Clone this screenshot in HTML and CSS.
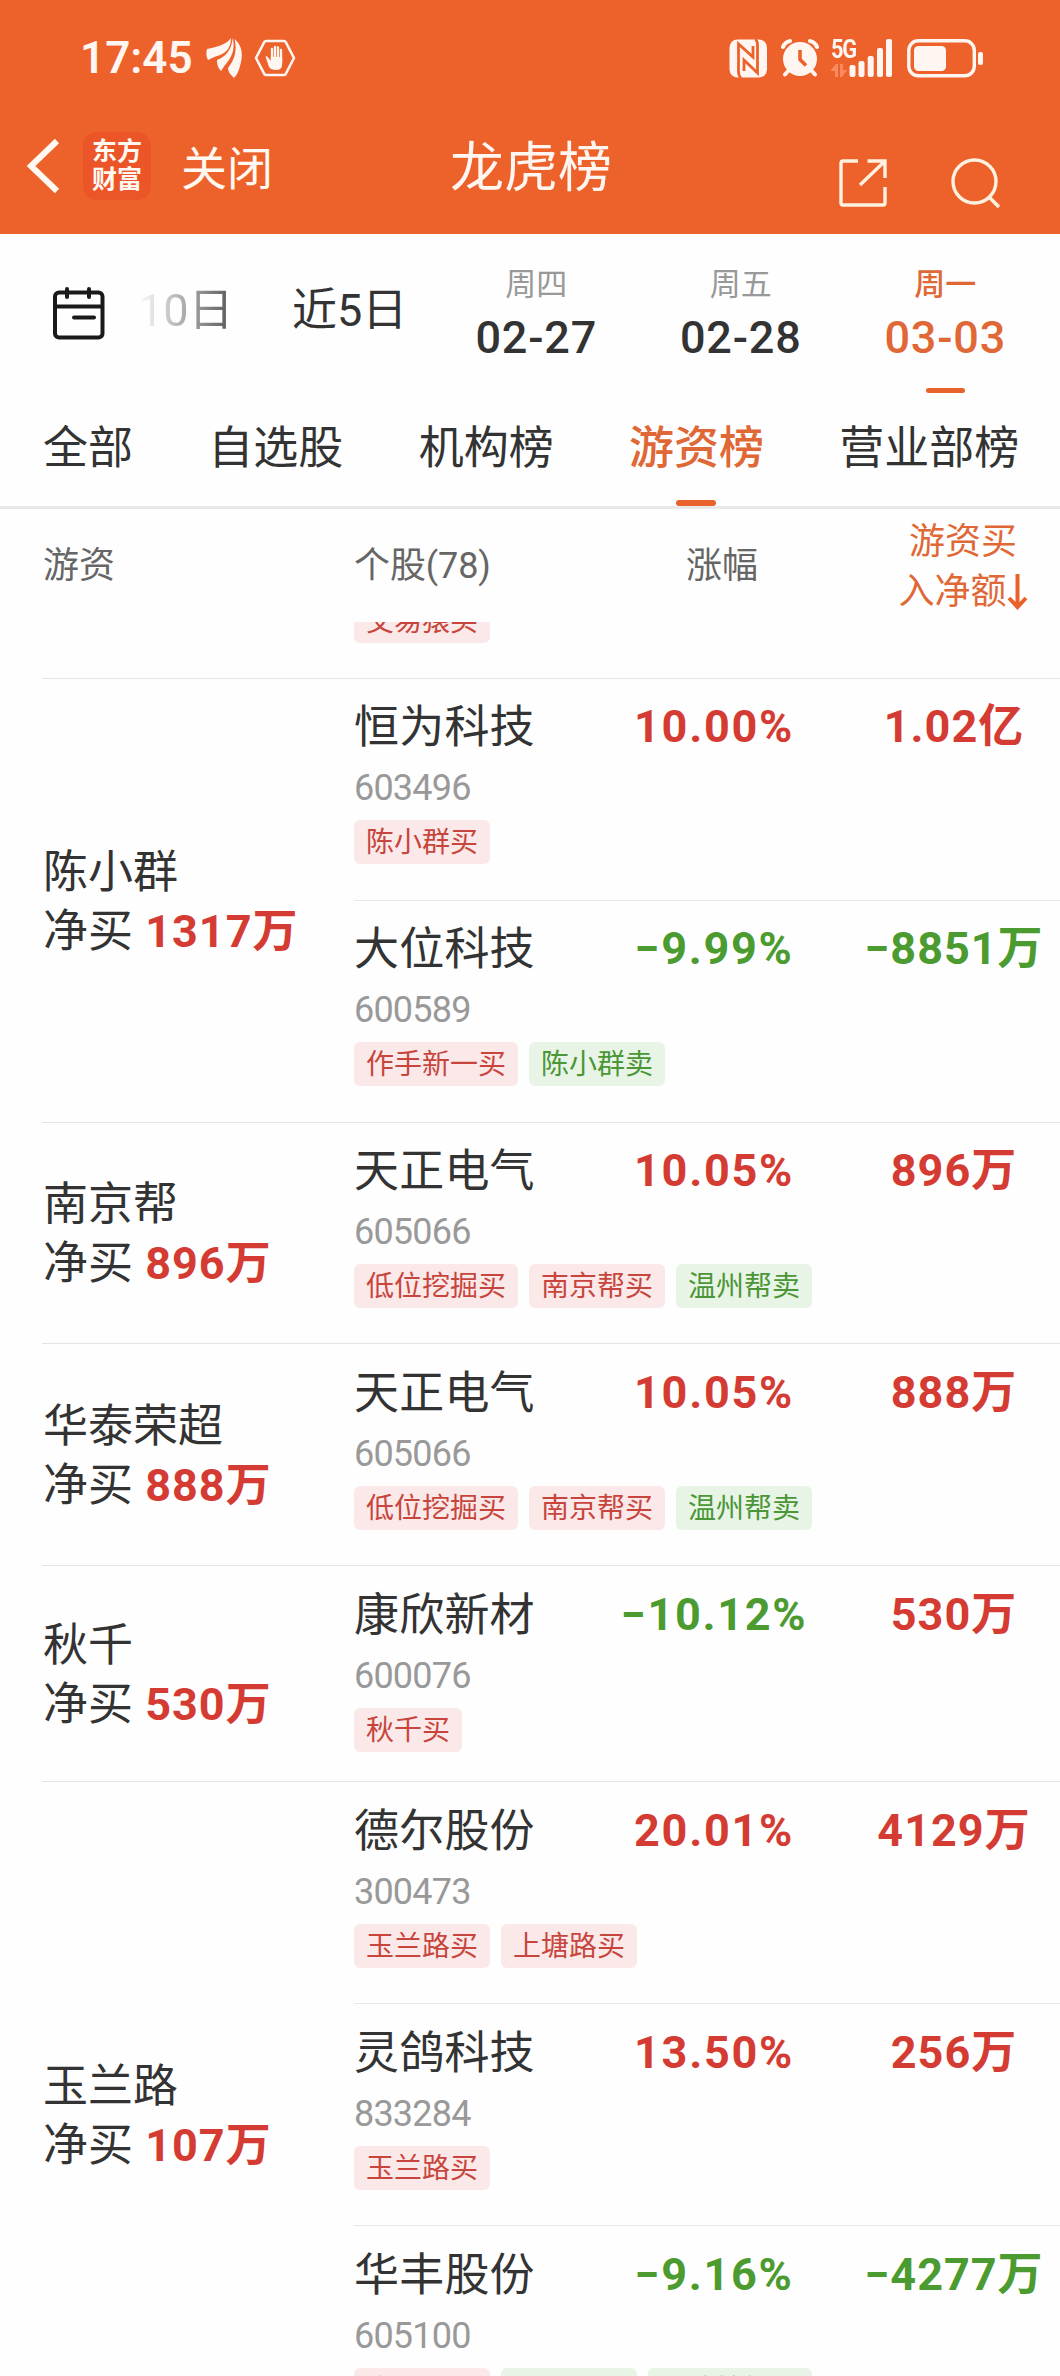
FILE: index.html
```html
<!DOCTYPE html>
<html lang="zh-CN">
<head>
<meta charset="utf-8">
<title>龙虎榜</title>
<link rel="stylesheet" href="styles.css">
</head>
<body>
<div class="screen">
  <header class="top">
    <div class="status">
      <span class="clock">17:45</span>
      <svg class="swoosh" width="36" height="42" viewBox="0 0 36 42"><g fill="#fff6f1"><path d="M1 12C10 10 20 8 25 1C25 13 18 17 11 19C7 20 5 22 2 23C0 19 0 16 1 12Z"/><path d="M26.500 1C30 12 25 21 20 27C18 29 17 31 15 34C12 31 11 28 11 23C19 20 26 13 26.500 1Z"/><path d="M28.500 2C37 9 37 19 34 29C33 33 31 38 28 41C25 38 22 35 22 31C27 25 32 15 28.500 2Z"/></g></svg>
      <svg class="hex" width="42" height="38" viewBox="0 0 42 38"><path d="M12 2H30Q31 2 31.700 3L40 19L31.700 35Q31 36 30 36H12Q11 36 10.300 35L2 19L10.300 3Q11 2 12 2Z" fill="none" stroke="#fff6f1" stroke-width="2.600" stroke-linejoin="round"/><path d="M18 10V22M21 8V22M24 8.500V22M27 11V23" fill="none" stroke="#fff6f1" stroke-width="2.300" stroke-linecap="round"/><path d="M11.500 17.500Q13.500 16.500 14.500 19L16.800 22V18H28.200V25Q28.200 31 22 31Q17 31 15 28Z" fill="#fff6f1"/></svg>
      <span class="fill"></span>
      <svg class="nfc" width="39" height="39" viewBox="0 0 39 39"><rect x="0.500" y="0.500" width="37.500" height="38" rx="8" fill="#fff6f1"/><path d="M12 39Q9.500 37 9.500 33V5L24 18V7M26.500 0Q28.500 2 28.500 6V34L15 21V32" fill="none" stroke="#ed622b" stroke-width="2.800"/></svg>
      <svg class="alarm" width="38" height="38" viewBox="0 0 38 38"><g fill="none" stroke="#fff6f1" stroke-linecap="round"><path d="M2 8Q4 3 9 2M29 2Q34 3 36 8" stroke-width="4"/><path d="M8 31L4 35.500M30 31L34 35.500" stroke-width="4"/></g><circle cx="19" cy="20" r="17" fill="#fff6f1"/><path d="M19 11V20.500L25 26.500" fill="none" stroke="#ed622b" stroke-width="3.600"/></svg>
      <div class="net">
        <div class="gen"><span>5G</span><svg width="16" height="13" viewBox="0 0 16 13"><path d="M0 6L5 0H7V13H4V7H0ZM9 0H12V6H16L11 13H9Z" fill="#f78a5f"/></svg></div>
        <svg width="44" height="38" viewBox="0 0 44 38"><g fill="#fff6f1"><rect x="0.500" y="26" width="6" height="12" rx="2"/><rect x="9.500" y="22" width="6" height="16" rx="2"/><rect x="18.700" y="17" width="6" height="21" rx="2"/><rect x="28" y="9" width="6" height="29" rx="2"/><rect x="37" y="0" width="6" height="38" rx="2"/></g></svg>
      </div>
      <svg class="batt" width="77" height="39" viewBox="0 0 77 39"><rect x="1.800" y="1.800" width="65.500" height="35" rx="9.500" fill="none" stroke="#fff6f1" stroke-width="3.400"/><rect x="7" y="7" width="32" height="25" rx="4.500" fill="#fff6f1"/><rect x="71" y="13" width="5" height="13" rx="2" fill="#fff6f1"/></svg>
    </div>
    <div class="nav">
      <svg class="back" width="34" height="56" viewBox="0 0 34 56"><path d="M31 3L5 28L31 53" fill="none" stroke="#fff9f2" stroke-width="6"/></svg>
      <div class="app"><span>东方</span><span>财富</span></div>
      <span class="close">关闭</span>
      <h1>龙虎榜</h1>
      <svg class="share" width="48" height="48" viewBox="0 0 48 48"><path d="M19 2H4Q2 2 2 4V44Q2 46 4 46H44Q46 46 46 44V28M28.500 2H46V19M46 2L21 26" fill="none" stroke="#fff1df" stroke-width="3.400"/></svg>
      <svg class="search" width="50" height="50" viewBox="0 0 50 50"><circle cx="23.500" cy="23.500" r="21.500" fill="none" stroke="#fff1df" stroke-width="3.400"/><path d="M38 39L48 49" stroke="#fff1df" stroke-width="3.600"/></svg>
    </div>
  </header>

  <div class="dates">
    <svg class="cal" width="52" height="54" viewBox="0 0 52 54"><g fill="none" stroke="#1a1a1a" stroke-width="4"><rect x="2" y="6.500" width="47.500" height="45" rx="4"/><path d="M2 20.500H50"/><path d="M14 3V11M36 3V11M21 31.500H41" stroke-linecap="round"/></g></svg>
    <span class="range faded">10日</span>
    <span class="range">近5日</span>
    <div class="day"><small>周四</small><b>02-27</b></div>
    <div class="day"><small>周五</small><b>02-28</b></div>
    <div class="day on"><small>周一</small><b>03-03</b><i></i></div>
  </div>

  <nav class="tabs">
    <span>全部</span><span>自选股</span><span>机构榜</span><span class="on">游资榜<i></i></span><span>营业部榜</span>
  </nav>

  <div class="head">
    <span class="h-who">游资</span>
    <span class="h-stock">个股(78)</span>
    <span class="h-pct">涨幅</span>
    <div class="h-net"><span>游资买</span><span>入净额<svg width="21" height="37" viewBox="0 0 21 37"><path d="M10.500 1V34M2 25L10.500 34L19 25" fill="none" stroke="#e8632b" stroke-width="4"/></svg></span></div>
  </div>

  <main class="list">
    <div class="tail"><span class="tag buy">交易猿买</span></div>

    <section class="group">
      <div class="who"><span>陈小群</span><span>净买 <b>1317万</b></span></div>
      <div class="rows">
        <article class="row up">
          <div class="line"><span class="name">恒为科技</span><b>10.00%</b><b>1.02亿</b></div>
          <div class="code">603496</div>
          <div class="tags"><span class="tag buy">陈小群买</span></div>
        </article>
        <article class="row down">
          <div class="line"><span class="name">大位科技</span><b>−9.99%</b><b>−8851万</b></div>
          <div class="code">600589</div>
          <div class="tags"><span class="tag buy">作手新一买</span><span class="tag sell">陈小群卖</span></div>
        </article>
      </div>
    </section>

    <section class="group tight">
      <div class="who"><span>南京帮</span><span>净买 <b>896万</b></span></div>
      <div class="rows">
        <article class="row up">
          <div class="line"><span class="name">天正电气</span><b>10.05%</b><b>896万</b></div>
          <div class="code">605066</div>
          <div class="tags"><span class="tag buy">低位挖掘买</span><span class="tag buy">南京帮买</span><span class="tag sell">温州帮卖</span></div>
        </article>
      </div>
    </section>

    <section class="group low">
      <div class="who"><span>华泰荣超</span><span>净买 <b>888万</b></span></div>
      <div class="rows">
        <article class="row up">
          <div class="line"><span class="name">天正电气</span><b>10.05%</b><b>888万</b></div>
          <div class="code">605066</div>
          <div class="tags"><span class="tag buy">低位挖掘买</span><span class="tag buy">南京帮买</span><span class="tag sell">温州帮卖</span></div>
        </article>
      </div>
    </section>

    <section class="group low short">
      <div class="who"><span>秋千</span><span>净买 <b>530万</b></span></div>
      <div class="rows">
        <article class="row down">
          <div class="line"><span class="name">康欣新材</span><b>−10.12%</b><b class="pos">530万</b></div>
          <div class="code">600076</div>
          <div class="tags"><span class="tag buy">秋千买</span></div>
        </article>
      </div>
    </section>

    <section class="group low">
      <div class="who"><span>玉兰路</span><span>净买 <b>107万</b></span></div>
      <div class="rows">
        <article class="row up">
          <div class="line"><span class="name">德尔股份</span><b>20.01%</b><b>4129万</b></div>
          <div class="code">300473</div>
          <div class="tags"><span class="tag buy">玉兰路买</span><span class="tag buy">上塘路买</span></div>
        </article>
        <article class="row up">
          <div class="line"><span class="name">灵鸽科技</span><b>13.50%</b><b>256万</b></div>
          <div class="code">833284</div>
          <div class="tags"><span class="tag buy">玉兰路买</span></div>
        </article>
        <article class="row down">
          <div class="line"><span class="name">华丰股份</span><b>−9.16%</b><b>−4277万</b></div>
          <div class="code">605100</div>
          <div class="tags"><span class="tag buy">方新侠买</span><span class="tag sell">玉兰路卖</span><span class="tag sell">低位挖掘卖</span></div>
        </article>
      </div>
    </section>
  </main>
</div>
</body>
</html>
```
FILE: styles.css
```css
* { box-sizing: border-box; }
body {
  margin: 0;
  background: #fefefe;
  color: #333;
  font-family: Roboto, "Noto Sans CJK SC", sans-serif;
}
svg { display: block; flex: none; }
.screen {
  width: 1060px;
  height: 2376px;
  overflow: hidden;
  display: flex;
  flex-direction: column;
}

/* Orange header */
.top { height: 234px; flex: none; background: #ed622b; color: #fff6f1; }
.status { display: flex; align-items: center; height: 100px; padding: 16px 76px 0 80px; }
.clock { width: 126px; font-size: 44px; line-height: 52px; font-weight: 600; white-space: nowrap; }
.hex { margin-left: 12px; }
.fill { flex: 1; }
.alarm { margin-left: 13px; }
.net { display: flex; margin-left: 12px; }
.gen { width: 18px; height: 38px; display: flex; flex-direction: column; justify-content: space-between; }
.gen span { font-size: 26px; line-height: 20px; font-weight: 700; letter-spacing: -1.5px; transform: scaleX(.84); transform-origin: left; }
.batt { margin-left: 14px; }
.nav { display: flex; align-items: center; height: 134px; padding: 0 0 2px 26px; }
.app {
  flex: none;
  width: 68px; height: 68px; margin-left: 23px; border-radius: 14px;
  background: #ec5528; color: #fff9f2;
  display: flex; flex-direction: column; align-items: center; justify-content: center;
  font-size: 25px; line-height: 28px; font-weight: 700;
}
.close { width: 92px; margin: 5px 0 0 30px; font-size: 46px; line-height: 60px; color: #fff9f2; white-space: nowrap; }
.nav h1 { width: 162px; margin: 5px 0 0 177px; font-size: 54px; line-height: 64px; font-weight: 400; white-space: nowrap; }
.share { margin: 34px 0 0 227px; }
.search { margin: 34px 0 0 64px; }

/* Date picker */
.dates { display: flex; height: 167px; flex: none; padding-left: 53px; }
.cal { margin-top: 52px; }
.range { margin-top: 47px; font-size: 45px; line-height: 60px; white-space: nowrap; width: 144px; }
.faded {
  width: 115px; margin-left: 33px; margin-right: 39px;
  -webkit-mask-image: linear-gradient(90deg, transparent, #000);
  mask-image: linear-gradient(90deg, transparent, #000);
}
.day { width: 204.500px; display: flex; flex-direction: column; align-items: center; padding-top: 31px; }
.faded + .range + .day { margin-left: -2px; }
.day small { font-size: 31px; line-height: 40px; color: #999; }
.day b { margin-top: 7px; font-size: 45px; line-height: 52px; font-weight: 500; letter-spacing: .8px; }
.day i { width: 39px; height: 5px; margin-top: 24px; border-radius: 3px; background: #e8632b; }
.on, .on small { color: #df6836; font-weight: 500; }

/* Board tabs */
.tabs { display: flex; gap: 75.300px; height: 108px; flex: none; padding-left: 43px; border-bottom: 3px solid #e8e8e8; }
.tabs span {
  height: 105px; padding-top: 18px; font-size: 45px; line-height: 60px; white-space: nowrap;
  display: flex; flex-direction: column; align-items: center;
}
.tabs i { width: 40px; height: 6px; margin-top: 21px; border-radius: 3px; background: #e8632b; }

/* Column headings */
.head { display: flex; align-items: center; height: 113px; flex: none; padding-left: 43px; font-size: 36px; line-height: 50px; color: #666; white-space: nowrap; }
.h-who { width: 311px; flex: none; }
.h-stock { width: 268px; flex: none; letter-spacing: -.1px; }
.h-pct { width: 200px; flex: none; text-align: center; }
.h-net { width: 282px; flex: none; display: flex; flex-direction: column; align-items: center; padding-top: 2px; color: #df6836; }
.h-net span { display: flex; align-items: center; }

/* Trader list */
.list { flex: 1; overflow: hidden; }
.tail { height: 56px; padding: 0 0 35px 354px; display: flex; align-items: flex-end; overflow: hidden; }
.group { display: flex; margin-left: 42px; border-top: 1px solid #e4e4e4; }
.who { width: 312px; display: flex; flex-direction: column; justify-content: center; padding: 2px 0 0 1px; font-size: 45px; line-height: 59px; white-space: nowrap; }
.who b { margin-left: 1px; color: #d43c33; letter-spacing: 1px; font-weight: 700; }
.rows { flex: 1; }
.row { height: 222px; padding-top: 18px; border-top: 1px solid #e8e8e8; }
.row:first-child { height: 221px; border-top: 0; }
.line { display: grid; grid-template-columns: 226px 268px 212px; height: 60px; font-size: 45px; line-height: 60px; }
.name { line-height: 62px; letter-spacing: .2px; }
.line b { text-align: center; letter-spacing: 1px; font-weight: 700; white-space: nowrap; }
.line .name + b { letter-spacing: 1.700px; }
.up b, .down .pos { color: #d43c33; }
.down b { color: #4b9b30; }
.down .pos { color: #d43c33; }
.code { margin-top: 9px; font-size: 36px; line-height: 44px; letter-spacing: -.8px; color: #999; }
.tags { display: flex; gap: 11px; margin-top: 10px; }
.tag { height: 44px; padding: 0 12px; border-radius: 6px; font-size: 28px; line-height: 45px; white-space: nowrap; }
.buy { background: #fae9e8; color: #c8453d; }
.sell { background: #e8f4e6; color: #4b9636; }
.tight .row { height: 220px; }
.low .row { padding-top: 19px; }
.short .row { height: 215px; }
```
